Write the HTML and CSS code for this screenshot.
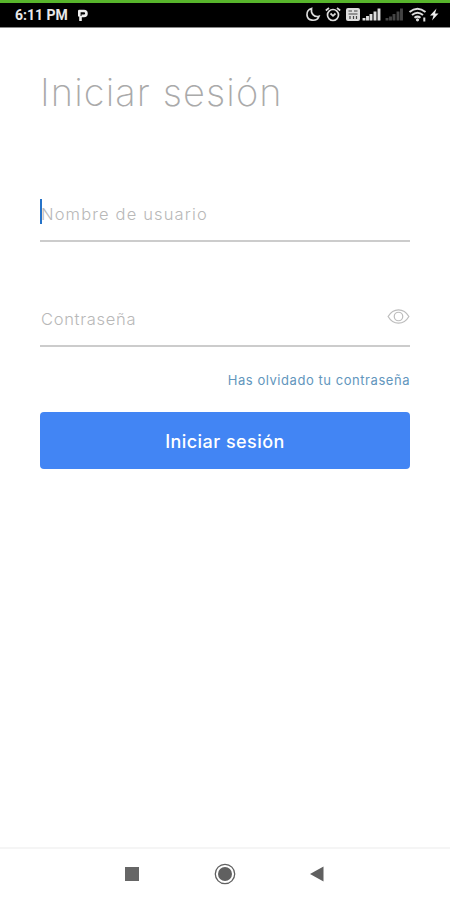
FILE: index.html
```html
<!DOCTYPE html>
<html lang="es">
<head>
    <meta charset="UTF-8">
    <meta name="viewport" content="width=device-width, initial-scale=1.0">
    <title>Iniciar sesión</title>
    <link rel="stylesheet" href="styles.css">
</head>
<body>
    <header class="status-bar">
        <span class="time">6:11 PM</span>
        <svg class="parking" width="12" height="14" viewBox="0 0 12 14">
            <path d="M3.500 13V8M2.300 8.500V3H7a2.400 2.400 0 0 1 0 4.900H4.500" fill="none" stroke="#eee" stroke-width="2.600" stroke-linejoin="round"/>
        </svg>
        <svg class="status-icons" width="136" height="18" viewBox="0 0 136 18">
            <!-- moon -->
            <path d="M6.500 2.500C0 4.500 .8 13.500 7 14.200C10.500 14.600 13 13 14 10.200C9.500 11.500 5.500 8 6.500 2.500Z" fill="none" stroke="#ddd" stroke-width="1.700"/>
            <!-- alarm -->
            <g fill="none" stroke="#ddd" stroke-width="1.700">
                <circle cx="28" cy="9" r="5.500"/>
                <path d="M20.800 4.500L24 2M35.200 4.500L32 2M25.500 7.500L28 9.800L30.500 7.500"/>
            </g>
            <!-- volte -->
            <rect x="41" y="2" width="14" height="13" rx="2" fill="#ddd"/>
            <path d="M43.500 5H47M49 5H52.500M43.500 8H52.500M45 10V13M48.500 10V13M51.500 10V13" stroke="#444" stroke-width="1.200"/>
            <!-- signal -->
            <path d="M59 14.500V12M62.500 14.500V10M66 14.500V8M70 14.500V5.500M74 14.500V2.500" stroke="#ddd" stroke-width="2.900"/>
            <path d="M82 14.500V12M85.500 14.500V10.500M89 14.500V8M93 14.500V5.500M96.500 14.500V2.500" stroke="#444" stroke-width="2.900"/>
            <!-- wifi -->
            <g fill="none" stroke="#ddd" stroke-width="2">
                <path d="M104.500 6Q112.500 -.5 120.500 6M107 9Q112.500 4.500 118 9M109.500 11.800Q112.500 9.500 115.500 11.800"/>
                <path d="M119.300 11.500V15.500"/>
            </g>
            <circle cx="112.500" cy="13.800" r="1.600" fill="#ddd"/>
            <!-- charging -->
            <path d="M131.500 2.500L125 9.500H128.500L127 14.500L133.500 7.500H130Z" fill="#eee"/>
        </svg>
    </header>

    <main class="login">
        <h1>Iniciar sesión</h1>
        <form>
            <div class="field">
                <span class="caret"></span>
                <input class="user" type="text" placeholder="Nombre de usuario">
            </div>
            <div class="field">
                <input class="password" type="password" placeholder="Contraseña">
                <svg class="eye" width="23" height="17" viewBox="0 0 24 18" fill="none" stroke="#bdbdbd" stroke-width="1.300">
                    <path d="M1 9C6.500 -.5 17.500 -.5 23 9C17.500 18.500 6.500 18.500 1 9Z"/>
                    <circle cx="12" cy="9" r="4.500"/>
                </svg>
            </div>
            <a class="forgot" href="#"><span>Has olvidado tu contraseña</span></a>
            <button type="button">Iniciar sesión</button>
        </form>
    </main>

    <nav class="nav-bar">
        <svg width="14" height="14" viewBox="0 0 14 14"><rect width="14" height="14" fill="#666"/></svg>
        <svg width="22" height="22" viewBox="0 0 22 22">
            <circle cx="11" cy="11" r="9.700" fill="none" stroke="#606060" stroke-width="1.300"/>
            <circle cx="11" cy="11" r="7" fill="#606060"/>
        </svg>
        <svg width="14" height="16" viewBox="0 0 14 16"><path d="M0 8L13.500 .5V15.500Z" fill="#606060"/></svg>
    </nav>
</body>
</html>
```

FILE: styles.css
```css
* {
    box-sizing: border-box;
}
body {
    margin: 0;
    height: 900px;
    display: flex;
    flex-direction: column;
    background: #fff;
    font-family: Inter, "Open Sans", sans-serif;
    overflow: hidden;
}
.status-bar {
    display: flex;
    align-items: center;
    height: 28px;
    padding: 0 9px 0 15px;
    background: #000;
    border-top: 3px solid #58b52c;
    border-bottom: 1px solid #888;
    color: #e8e8e8;
}
.time {
    width: 55px;
    font: bold 14px Roboto, sans-serif;
    white-space: nowrap;
}
.parking {
    margin-left: 7px;
}
.status-icons {
    margin-left: auto;
}
.login {
    flex: 1;
    padding: 40px 40px 0;
}
h1 {
    margin: 0;
    height: 48px;
    line-height: 48px;
    font-size: 38px;
    font-weight: 200;
    letter-spacing: 1.1px;
    color: #aaa;
    white-space: nowrap;
}
form {
    padding-top: 72px;
    display: flex;
    flex-direction: column;
}
.field {
    position: relative;
    display: flex;
    align-items: center;
    height: 54px;
    margin-bottom: 51px;
    padding-bottom: 1px;
    border-bottom: 2px solid #ccc;
}
.field + .field {
    margin-bottom: 24px;
}
input {
    flex: 1;
    min-width: 0;
    height: 30px;
    padding: 0 0 0 1px;
    border: none;
    outline: none;
    background: none;
    font-family: inherit;
    font-size: 16.5px;
    font-weight: 300;
}
input::placeholder {
    color: #b8b8b8;
}
.user {
    letter-spacing: 1.15px;
}
.password {
    letter-spacing: 0.7px;
}
.caret {
    position: absolute;
    left: 0;
    top: 11px;
    width: 2px;
    height: 25px;
    background: #2673c8;
}
.eye {
    margin-bottom: 4px;
}
.forgot {
    align-self: flex-end;
    height: 18px;
    line-height: 18px;
    font-size: 13px;
    letter-spacing: 0.55px;
    color: #6296bd;
    text-decoration: none;
}
button {
    height: 57px;
    margin-top: 23px;
    padding: 1px 0 0;
    border: none;
    border-radius: 4px;
    background: #4285f4;
    color: #fff;
    font-family: inherit;
    font-size: 18px;
    font-weight: 500;
    letter-spacing: 0.45px;
}
.nav-bar {
    display: flex;
    justify-content: space-between;
    align-items: center;
    height: 53px;
    padding: 0 126px 2px 125px;
    border-top: 2px solid #f5f5f5;
}
```
